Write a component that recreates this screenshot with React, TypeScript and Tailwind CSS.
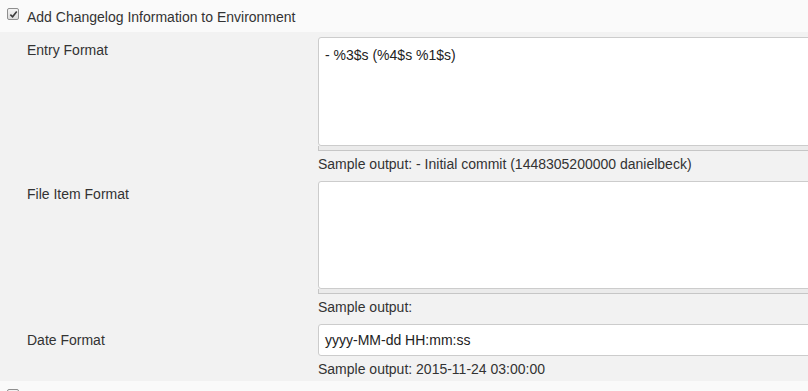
import React from 'react';

function CheckBox() {
  return (
    <span className="mt-[8px] ml-[7px] flex h-[12px] w-[12px] shrink-0 items-center justify-center rounded-[2px] border border-[#8f8f8f] bg-gradient-to-b from-[#f4f4f4] to-[#dcdcdc]">
      <svg viewBox="0 0 10 10" className="h-[9px] w-[9px]">
        <path d="M1.5 5.2 L4 7.6 L8.6 1.8" fill="none" stroke="#3a3a3a" strokeWidth="1.8" />
      </svg>
    </span>
  );
}

function Sample({ text, short }: { text: string; short?: boolean }) {
  return (
    <div className={`pt-[5px] leading-[16px] text-[#333] ${short ? 'h-[25px]' : 'h-[30px]'}`}>
      {text}
    </div>
  );
}

function Area({ value, h }: { value: string; h: string }) {
  return (
    <div>
      <div className={`${h} rounded-l-[3px] border border-[#cccccc] bg-white pl-[6px] pt-[9px] leading-[16px] text-[#222]`}>
        {value}
      </div>
      <div className="h-[5px] border-x border-b border-[#c6c6c6] bg-[#ebebeb]" />
    </div>
  );
}

export default function App() {
  return (
    <div
      className="h-[391px] w-[808px] overflow-hidden bg-[#f2f2f2] text-[14px] text-[#333]"
      style={{ fontFamily: '"Liberation Sans", Arial, sans-serif' }}
    >
      {/* Top checkbox row */}
      <div className="flex h-[32px] bg-[#fafafa]">
        <CheckBox />
        <span className="pl-[8px] pt-[9px] leading-[16px]">Add Changelog Information to Environment</span>
      </div>

      {/* Nested options */}
      <div className="grid grid-cols-[318px_560px] pt-[5px]">
        <div className="pl-[27px] pt-[5px] leading-[16px]">Entry Format</div>
        <div>
          <Area value="- %3$s (%4$s %1$s)" h="h-[109px]" />
          <Sample text="Sample output: - Initial commit (1448305200000 danielbeck)" />
        </div>

        <div className="pl-[27px] pt-[5px] leading-[16px]">File Item Format</div>
        <div>
          <Area value="" h="h-[108px]" />
          <Sample text="Sample output:" />
        </div>

        <div className="flex h-[32px] items-center pl-[27px] leading-[16px]">Date Format</div>
        <div>
          <div className="flex h-[32px] items-center rounded-l-[3px] border border-[#cccccc] bg-white pl-[6px] leading-[16px] text-[#222]">
            yyyy-MM-dd HH:mm:ss
          </div>
          <Sample text="Sample output: 2015-11-24 03:00:00" short />
        </div>
      </div>

      {/* Next checkbox row */}
      <div className="flex h-[32px] bg-[#fafafa]">
        <CheckBox />
        <span className="pl-[8px] pt-[9px] leading-[16px]">Add the changelog to the Console Output</span>
      </div>
    </div>
  );
}
